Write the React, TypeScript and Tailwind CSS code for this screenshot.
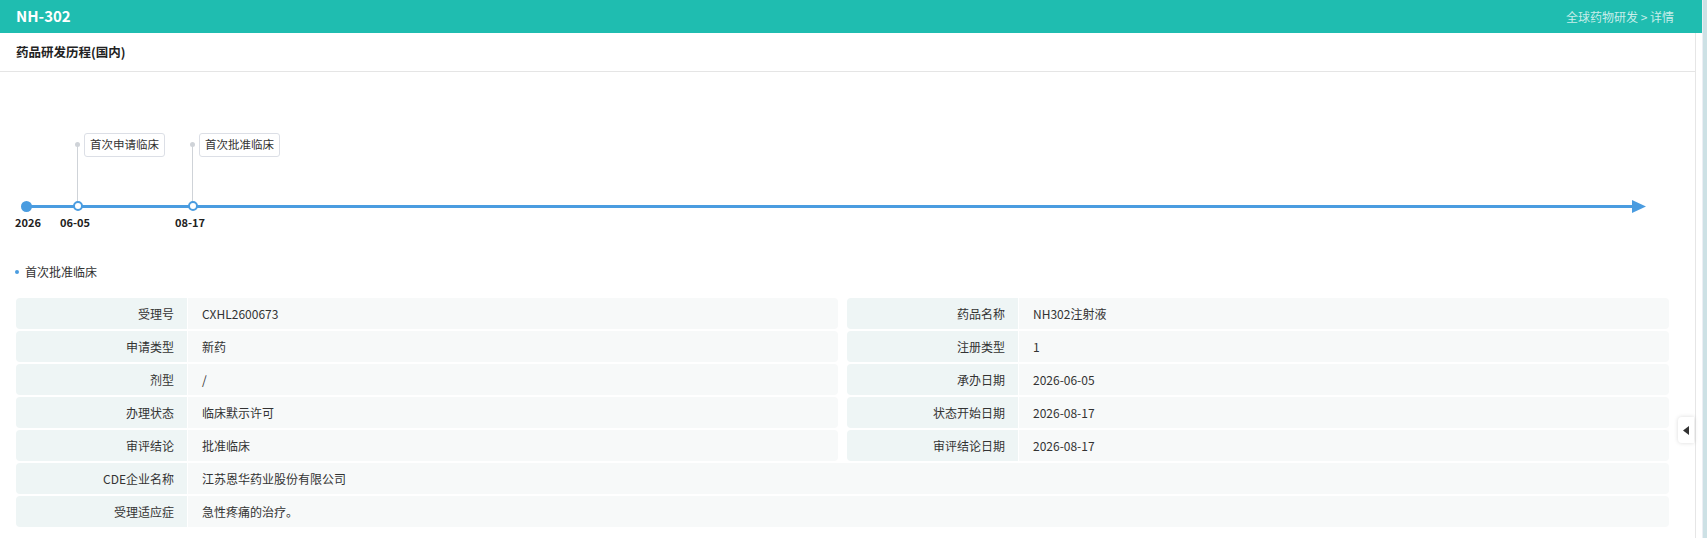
import React from "react";

const FONT = { fontFamily: '"Noto Sans CJK SC", "Noto Sans", sans-serif' };

type Cell = { label: string; value: string };

const ROWS: Cell[][] = [
  [
    { label: "受理号", value: "CXHL2600673" },
    { label: "药品名称", value: "NH302注射液" },
  ],
  [
    { label: "申请类型", value: "新药" },
    { label: "注册类型", value: "1" },
  ],
  [
    { label: "剂型", value: "/" },
    { label: "承办日期", value: "2026-06-05" },
  ],
  [
    { label: "办理状态", value: "临床默示许可" },
    { label: "状态开始日期", value: "2026-08-17" },
  ],
  [
    { label: "审评结论", value: "批准临床" },
    { label: "审评结论日期", value: "2026-08-17" },
  ],
  [{ label: "CDE企业名称", value: "江苏恩华药业股份有限公司" }],
  [{ label: "受理适应症", value: "急性疼痛的治疗。" }],
];

// timeline events, x = centre of the dot inside the timeline box
const EVENTS = [
  { x: 77, date: "06-05", title: "首次申请临床" },
  { x: 192, date: "08-17", title: "首次批准临床" },
];

function InfoCell({ label, value }: Cell) {
  return (
    <div className="flex flex-1 h-[31px] rounded-[4px] overflow-hidden gap-px">
      <div className="w-[171px] shrink-0 bg-[#eef5f5] flex items-center justify-end pr-[13px] text-[12px] text-[#333]">
        {label}
      </div>
      <div className="flex-1 bg-[#f7f9f9] flex items-center pl-[14px] text-[12px] text-[#333]">
        {value}
      </div>
    </div>
  );
}

function Timeline() {
  return (
    <div className="relative h-[168px]">
      {/* axis */}
      <div className="absolute left-[26px] top-[133px] w-[1607px] h-[3px] bg-[#4a9ce0]" />
      <svg
        className="absolute left-[1632px] top-[128px]"
        width="15"
        height="13"
        viewBox="0 0 15 13"
      >
        <polygon points="0,0 14,6.5 0,13" fill="#4a9ce0" />
      </svg>

      {/* start */}
      <div className="absolute left-[21px] top-[129px] w-[11px] h-[11px] rounded-full bg-[#4a9ce0]" />
      <div className="absolute left-[15px] top-[145px] text-[11px] font-bold text-[#222] leading-none">
        2026
      </div>

      {EVENTS.map((e) => (
        <React.Fragment key={e.date}>
          <div
            className="absolute top-[72px] w-px h-[62px] bg-[#cfd3d8]"
            style={{ left: e.x }}
          />
          <div
            className="absolute top-[70px] w-[5px] h-[5px] rounded-full bg-[#cfd3d8]"
            style={{ left: e.x - 2 }}
          />
          <div
            className="absolute top-[129px] w-[10px] h-[10px] rounded-full bg-white border-2 border-[#4a9ce0]"
            style={{ left: e.x - 4.5 }}
          />
          <div
            className="absolute top-[61px] h-[24px] px-[5px] flex items-center border border-[#dcdfe6] rounded-[3px] bg-white text-[11.5px] text-[#333]"
            style={{ left: e.x + 7 }}
          >
            {e.title}
          </div>
          <div
            className="absolute top-[145px] w-[50px] -ml-[25px] text-center text-[11px] font-bold text-[#222] leading-none"
            style={{ left: e.x - 2 }}
          >
            {e.date}
          </div>
        </React.Fragment>
      ))}
    </div>
  );
}

export default function App() {
  return (
    <div className="flex w-full h-[538px] bg-white overflow-hidden" style={FONT}>
      <div className="flex-1 flex flex-col min-w-0 relative">
        {/* Header */}
        <div className="h-[33px] bg-[#1fbdb0] flex items-center justify-between pl-[16px] pr-[28px] shrink-0">
          <span className="text-[15px] font-bold text-white">NH-302</span>
          <span className="text-[12px] text-white/75">全球药物研发 &gt; 详情</span>
        </div>

        <div className="flex-1 flex flex-col mr-[6px] border-r border-[#e6e6e6]">
          {/* Section title */}
          <div className="h-[39px] border-b border-[#e5e5e5] flex items-center pl-[16px] shrink-0">
            <span className="text-[12.5px] font-bold text-[#222]">药品研发历程(国内)</span>
          </div>

          <Timeline />

          <div className="flex items-center gap-[6px] pl-[15px] h-[20px] mt-[22px]">
            <span className="w-[4px] h-[4px] rounded-full bg-[#4a9ce0]" />
            <span className="text-[12px] text-[#333]">首次批准临床</span>
          </div>

          {/* Detail table */}
          <div className="flex flex-col gap-[2px] pl-[16px] w-[1669px] mt-[16px]">
            {ROWS.map((row, i) => (
              <div key={i} className="flex gap-[9px]">
                {row.map((c) => (
                  <InfoCell key={c.label} {...c} />
                ))}
              </div>
            ))}
          </div>
        </div>

        {/* collapse tab */}
        <div className="absolute left-[1678px] top-[417px] w-[16px] h-[26px] bg-white rounded-l-[4px] shadow-[0_0_4px_rgba(0,0,0,0.15)] flex items-center justify-center">
          <svg width="7" height="9" viewBox="0 0 7 9">
            <polygon points="6,0 0,4.5 6,9" fill="#333" />
          </svg>
        </div>
      </div>

      {/* scroll strip */}
      <div className="w-[5px] bg-[#cde1e5] border-l border-[#eceef4] shrink-0" />
    </div>
  );
}
